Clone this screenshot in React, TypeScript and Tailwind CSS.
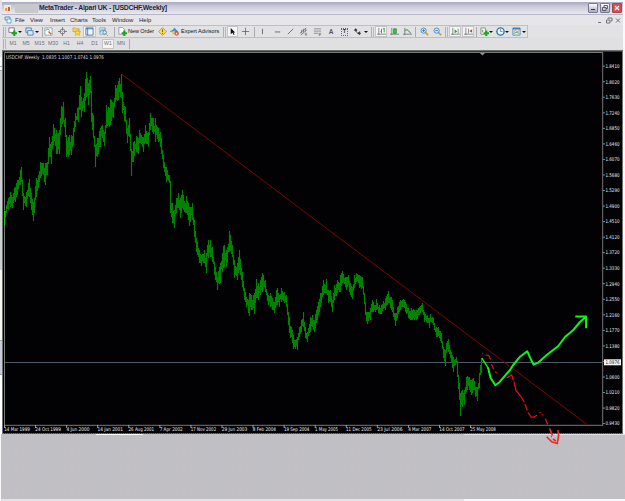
import React from "react";

type Band = [number, number, number];

// x, high, low: measured at three units per pixel, relative to each segment's origin
const segments: { ox: number; oy: number; pts: Band[] }[] = [
  {
    ox: 0,
    oy: 50,
    pts: [
      [14,480,525],[20,465,490],[30,425,470],[38,440,475],[45,410,455],[52,390,435],[60,360,405],[65,350,395],[69,430,480],[78,425,470],[88,387,440],[95,430,480],[101,455,512],[108,385,440],[115,375,415],[122,335,385],[130,340,375],[136,340,405],[142,335,375],[148,262,320],[155,275,342],[160,222,285],[168,240,312],[178,240,312],[183,168,230],[190,155,215],[195,205,260],[200,260,320],[206,260,322],[213,255,315],[220,235,285],[226,190,230],[235,170,215],[240,108,180],[245,140,200],[252,130,185],[259,65,140],[265,100,165],[271,78,130],[275,165,215],[280,195,265],[287,290,350],[293,265,322],[300,235,290],[306,225,265],[313,245,288],[320,165,235],[327,175,232],[332,148,225],[340,160,205],[347,105,155],[355,92,150],[363,73,145],[368,125,190],[375,170,215],[382,235,280],[389,205,260],[395,310,377],[400,275,335],[410,258,305],[416,265,312],[419,240,280],
    ],
  },
  {
    ox: 140,
    oy: 80,
    pts: [
      [0,160,190],[10,170,215],[17,135,190],[25,155,200],[31,100,150],[38,115,155],[45,115,185],[55,145,185],[62,155,200],[70,225,265],[80,260,305],[87,285,310],[92,350,400],[98,370,430],[102,390,445],[108,355,400],[115,340,385],[121,355,415],[127,330,385],[135,370,400],[140,347,400],[148,380,438],[157,370,420],[163,420,470],[170,475,515],[178,510,550],
    ],
  },
  {
    ox: 200,
    oy: 220,
    pts: [
      [4,105,138],[12,90,130],[18,100,158],[24,60,115],[32,60,110],[38,80,125],[45,140,180],[52,170,210],[60,130,190],[66,100,155],[72,75,140],[80,90,140],[88,33,95],[97,75,110],[104,120,175],[112,130,180],[119,90,150],[126,155,200],[134,205,240],[140,230,260],[148,220,288],[155,225,270],[162,220,282],[168,178,235],[176,190,240],[188,160,215],[196,180,215],[204,225,255],[212,220,260],[222,245,280],[231,203,255],[238,225,260],[244,205,245],[252,215,250],[260,225,262],[268,290,340],[276,330,370],[281,345,388],[292,350,390],[298,320,350],[304,300,335],[310,275,320],[316,320,355],[323,335,367],[332,290,335],[338,285,320],[342,300,335],[350,270,310],[356,245,285],[362,220,260],[370,180,225],[378,178,220],[386,210,250],[391,210,245],[397,240,277],[404,195,240],[412,180,220],[417,190,215],
    ],
  },
  {
    ox: 340,
    oy: 240,
    pts: [
      [0,105,155],[8,93,130],[18,110,150],[25,105,135],[30,130,165],[37,140,178],[44,105,145],[50,98,125],[58,105,145],[66,110,145],[71,150,165],[76,190,225],[82,215,253],[90,205,240],[98,180,215],[105,195,215],[110,178,210],[117,195,222],[124,195,222],[135,175,210],[145,153,190],[152,170,205],[158,180,215],[165,220,258],[172,200,235],[182,180,210],[190,178,200],[197,185,215],[205,205,235],[213,205,240],[222,210,240],[230,210,240],[238,200,225],[246,190,215],[254,215,245],[262,225,250],[268,235,265],[272,222,245],[280,235,255],[288,260,290],[296,260,288],[304,280,310],[310,320,355],[315,330,377],[320,310,340],[325,297,335],[333,335,370],[340,350,397],[348,352,370],[352,370,410],[357,430,480],[361,460,527],[366,450,500],[373,450,495],[380,410,455],[388,410,450],[395,420,465],[401,415,450],[407,440,470],[412,440,482],[418,400,445],[424,355,400],
    ],
  },
];

const bands: Band[] = segments.flatMap((s) =>
  s.pts.map(([x, h, l]): Band => [s.ox + x / 3, s.oy + h / 3, s.oy + l / 3])
);

function buildBars(): string {
  bands.sort((a, b) => a[0] - b[0]);
  const last = Math.round(bands[bands.length - 1][0]);
  // every weekly bar covers one pixel column; measured extremes land on their own column
  const measured = new Map<number, [number, number]>();
  for (const [x, h, l] of bands) {
    const k = Math.floor(x);
    const m = measured.get(k);
    measured.set(k, m ? [Math.min(m[0], h), Math.max(m[1], l)] : [h, l]);
  }
  let d = "";
  let i = 0;
  let prev: [number, number] | null = null;
  for (let px = Math.floor(bands[0][0]); px <= last; px++) {
    let top: number;
    let bot: number;
    const m = measured.get(px);
    if (m) {
      [top, bot] = m;
    } else {
      while (i < bands.length - 2 && bands[i + 1][0] < px + 0.5) i++;
      const [x0, h0, l0] = bands[i];
      const [x1, h1, l1] = bands[i + 1];
      const t = Math.min(1, Math.max(0, (px + 0.5 - x0) / (x1 - x0 || 1)));
      const h = h0 + (h1 - h0) * t;
      const l = l0 + (l1 - l0) * t;
      const a = Math.abs(Math.sin(px * 12.9898) * 17.31) % 1;
      const b = Math.abs(Math.sin(px * 78.233) * 23.7) % 1;
      top = h + (l - h) * (0.42 * a - 0.06);
      bot = l - (l - h) * (0.42 * b - 0.06);
    }
    top = Math.round(top);
    bot = Math.max(Math.round(bot), top + 4);
    // neighbouring bars always share part of their range
    if (prev) {
      top = Math.min(top, prev[1] - 2);
      bot = Math.max(bot, prev[0] + 2);
    }
    prev = [top, bot];
    d += `M${px + 0.5} ${top}V${bot}`;
  }
  return d;
}
const bars = buildBars();

const prices = ["1.8410","1.8020","1.7630","1.7240","1.6850","1.6460","1.6070","1.5680","1.5290","1.4900","1.4510","1.4120","1.3720","1.3330","1.2940","1.2550","1.2160","1.1770","1.1380","","1.0600","1.0210","0.9820","0.9430"];
const dates = ["14 Mar 1999","24 Oct 1999","4 Jun 2000","14 Jan 2001","26 Aug 2001","7 Apr 2002","17 Nov 2002","29 Jun 2003","8 Feb 2004","19 Sep 2004","1 May 2005","11 Dec 2005","23 Jul 2006","4 Mar 2007","14 Oct 2007","25 May 2008"];

function Chart() {
  return (
    <svg className="block h-[384px] w-[621px] font-['DejaVu_Sans_Condensed','DejaVu_Sans',sans-serif]" viewBox="2 50 621 384">
      <rect x="2" y="50" width="621" height="384" fill="#6f716d" />
      <rect x="3" y="51.5" width="619" height="381.5" fill="#020104" />
      <path d="M4.5 425V52.5H603" fill="none" stroke="#777b7b" />
      <path d="M602.7 52.5V425.5M4 425.3H603" fill="none" stroke="#777" />
      <path d="M4 433.4H622" stroke="#2c2c2c" strokeWidth=".8" strokeDasharray="1 1" />
      <path d="M5 362.5H603" stroke="#4f5a66" />
      <path d="M480 53h5l-2.5 2.4z" fill="#8598a8" />
      <path d={bars} stroke="#008400" strokeWidth="1.15" fill="none" />
      <path d="M4.7 211v14" stroke="#20e020" />
      <path d="M121.5 74L587 424.5" stroke="#8c0505" strokeWidth=".9" />
      <g fill="none" stroke="#f01010" strokeWidth="1.2" strokeLinecap="round">
        <path d="M482.6 353.6h.1M486 355l3 .8 1.4 3.2M491.7 364.5l1.8 4.5M495.5 372l.8.6M507.5 377.4l4.2-2.4 1.5 5" />
        <path d="M514 382l2 8.5 4.6 5.5 3.4 5.5M525 404.5l2.2 5.5M528.5 413l2.5 4 2.8.2 3-1.9M540 412.4h.2M542.6 414.5h.2M545.5 419l2 5M549.5 428.5l2.6 6.5" />
      </g>
      <path d="M481.8 358.2l6.6 10.2" fill="none" stroke="#08f818" strokeWidth="1.4" />
      <path d="M488 367.5l2.600 10.500 4.800 7.200 4-3L510 370l3.200-5 6.800-8.300 7.200-5.500 2.800 6.200 3.500 7.200 4.800-2 8.400-7.600 11.600-9L565 337l8.300-7 6.700-8 6-5.300M575.300 316.400h10.800v11.800" fill="none" stroke="#08f818" strokeWidth="2" strokeLinejoin="round" />
      <text x="6" y="58.5" fill="#ddd" fontSize="5.1" textLength="98" lengthAdjust="spacingAndGlyphs" xmlSpace="preserve">USDCHF,Weekly  1.0835 1.1007 1.0741 1.0976</text>
      {prices.map((p, i) => (
        <g key={i}>
          <path d={`M603 ${66.2 + i * 15.54}h2`} stroke="#aaa" strokeWidth=".8" />
          {p && <text x="605.5" y={68 + i * 15.54} fill="#eee" fontSize="5.2" textLength="14" lengthAdjust="spacingAndGlyphs">{p}</text>}
        </g>
      ))}
      <rect x="604" y="359.3" width="17" height="6" fill="#f4f4f4" />
      <text x="605.5" y="364.2" fill="#111" fontSize="5" textLength="14" lengthAdjust="spacingAndGlyphs">1.0976</text>
      {dates.map((d, i) => (
        <g key={d}>
          <path d={`M${4.5 + i * 31.07} 425v3`} stroke="#bbb" strokeWidth=".8" />
          <text x={4.3 + i * 31.07} y="431.3" fill="#eee" fontSize="5.1" textLength={d.length * 2.35 - 0.4} lengthAdjust="spacingAndGlyphs">{d}</text>
        </g>
      ))}
    </svg>
  );
}

function Icon({ w = "w-[14px]", active = false, children }: { w?: string; active?: boolean; children: React.ReactNode }) {
  return (
    <span className={`flex h-[11px] shrink-0 items-center justify-center ${w} ${active ? "border border-[#c6c6c8] bg-[#f5f5f5]" : ""}`}>
      <svg viewBox="0 0 10 10" className="h-[9px] w-[9px] shrink-0" fill="none" stroke="#666" strokeWidth="1">{children}</svg>
    </span>
  );
}
const Caret = () => <span className="mr-[2px] h-0 w-[4px] shrink-0 border-x-2 border-t-2 border-x-transparent border-t-[#111]" />;
const Sep = ({ w = "w-[4px]" }: { w?: string }) => (
  <span className={`flex h-[10px] shrink-0 justify-center ${w}`}><span className="w-px bg-[#aaaaad]" /></span>
);
const Grip = () => (
  <span className="flex h-[10px] w-[5px] shrink-0 justify-center gap-px"><span className="w-px bg-[#b0b0b3]" /><span className="w-px bg-[#b8b8bb]" /></span>
);
const Plus = () => <path d="M7 4v6M4 7h6" stroke="#16a816" strokeWidth="2.3" />;
const Bubble = ({ minus = false }: { minus?: boolean }) => (
  <>
    <path d="M6 6l3 3" stroke="#c9a21c" strokeWidth="1.8" />
    <circle cx="4" cy="4" r="2.9" fill="#d4ebfb" stroke="#4488bd" />
    <path d={minus ? "M2.5 4h3" : "M2.5 4h3M4 2.5v3"} stroke="#2a67a3" strokeWidth=".9" />
  </>
);

function Toolbar() {
  return (
    <div className="flex h-[13px] w-[526px] items-center overflow-hidden border-y border-r border-[#bfbfc3] bg-[#e2e2e5]">
      <Grip />
      <Icon w="w-[11px]"><path d="M1 1h6v5H1z" fill="#fff" stroke="#637b8c" /><Plus /></Icon><Caret />
      <Icon w="w-[11px]"><path d="M1 1h6v5H1z" fill="#c9e1f5" stroke="#4d83b4" /><path d="M3 4h6v5H3z" fill="#d9ebf8" stroke="#4d83b4" /></Icon><Caret />
      <Sep w="w-[2px]" />
      <Icon w="w-[11px]"><path d="M1 1h8v8H1z" fill="#fff" stroke="#8ba5b7" /><path d="M2 4l2-2 2 2" stroke="#24a52c" /><path d="M5 5l3 3" stroke="#e65332" strokeWidth="1.5" /></Icon>
      <Icon w="w-[16px]"><circle cx="5" cy="5" r="2.7" stroke="#767676" /><path d="M5 0v4M5 6v4M0 5h4M6 5h4" stroke="#777" /></Icon>
      <Icon w="w-[13px]"><path d="M1 1h3l1 1h3v3H1z" fill="#f5d35c" stroke="#c69c26" strokeWidth=".7" /><path d="M6 3l1.2 2 2.4.3-1.8 1.6.5 2.4L6 8.2 3.9 9.3l.4-2.4-1.600-1.600L5 5z" fill="#ffdc3d" stroke="#c98f18" strokeWidth=".6" /></Icon>
      <Icon w="w-[13px]" active><path d="M1 1h8v8H1zM3 1v8" fill="#f8fcff" stroke="#3c78b4" /><path d="M1 2h8" stroke="#3c78b4" /></Icon>
      <Icon w="w-[15px]"><path d="M1 1h6v7H1z" fill="#e6f1f8" stroke="#7fa7c4" /><path d="M2 6V4l2-1 1 2 1-3" stroke="#4f86ae" /><circle cx="6.3" cy="6" r="2" fill="#d2eafb" stroke="#4888ba" /><path d="M8 8l2 2" stroke="#d0a02e" /></Icon>
      <Sep w="w-[6px]" />
      <Icon w="w-[11px]"><path d="M1 .5h4l2 2V8H1z" fill="#fff" stroke="#6e8ca0" strokeWidth=".8" /><Plus /></Icon>
      <span className="w-[28px] shrink-0 whitespace-nowrap text-[5.5px] tracking-[-0.05px] text-[#111]">New Order</span>
      <Icon w="w-[12px]"><path d="M5 .7L9.3 5 5 9.3.7 5z" fill="#ffda4d" stroke="#c6981e" /><path d="M5 2.7v3M5 6.8v1" stroke="#7a5815" /></Icon>
      <Icon w="w-[13px]"><path d="M2 5l3-4 3 4z" fill="#4d9dd8" stroke="#3377a8" strokeWidth=".6" /><path d="M0 5q5-3 9 0" stroke="#4a8ec1" /><circle cx="4" cy="6.5" r="2" fill="#f0c466" stroke="none" /><circle cx="7.4" cy="7.2" r="2.4" fill="#e03525" stroke="none" /><path d="M6.3 6.3h2v2h-2z" fill="#fff" stroke="none" /></Icon>
      <span className="w-[41px] shrink-0 whitespace-nowrap text-[5.5px] text-[#111]">Expert Advisors</span>
      <Grip />
      <Icon w="w-[11px]" active><path d="M3 1v7l2-1.600L6.300 9l1-.5L6.100 6H8z" fill="#111" stroke="none" /></Icon>
      <Icon w="w-[15px]"><path d="M5 1v8M1 5h8" stroke="#555" strokeWidth=".8" /></Icon>
      <Sep w="w-[2px]" />
      <Icon w="w-[15px]"><path d="M5 2v6" /></Icon>
      <Icon w="w-[14px]"><path d="M2 5.5h6" /></Icon>
      <Icon w="w-[13px]"><path d="M2 8l6-6" /></Icon>
      <Icon w="w-[13px]"><path d="M1 7l7-6M2 9l7-6M3 3v4M5 2v4M7 2v3" strokeWidth=".8" /><path d="M7 7h2M7 7v2h2M7 8h2" strokeWidth=".6" /></Icon>
      <Icon><path d="M1 2h8M1 4.5h8M1 7h5M7 7h2M7 7v3M7 8.5h2" strokeWidth=".7" /></Icon>
      <span className="w-[14px] shrink-0 text-center text-[6.5px] font-bold leading-[11px] text-[#555]">A</span>
      <span className="flex w-[13px] shrink-0 justify-center"><span className="flex h-[8px] w-[7px] items-center justify-center border border-dotted border-[#666] text-[5.5px] font-bold text-[#333]">T</span></span>
      <Icon w="w-[13px]"><path d="M1 3.500L3 1.500 5 3.500 3 5z" fill="#333" stroke="none" /><path d="M3 4l2 3 3-2" stroke="#555" /><path d="M5 7l2-1.500L9 7 7 9z" fill="#333" stroke="none" /></Icon><Caret />
      <Grip />
      <Icon w="w-[12px]" active><path d="M2 1v8M0 8h10" strokeWidth=".8" /><path d="M5 2v5M5 5H4M8 1v5M8 2H6.500" stroke="#26a232" /></Icon>
      <Icon w="w-[14px]"><path d="M2 1v8M0 8h10" strokeWidth=".8" /><path d="M4 2h3v5H4z" fill="#32d435" stroke="#188724" strokeWidth=".8" /></Icon>
      <Icon w="w-[13px]"><path d="M2 1v8M0 8h10" strokeWidth=".8" /><path d="M2 4q3-2 4 0t3 3" stroke="#278a35" /></Icon>
      <Sep w="w-[3px]" />
      <Icon w="w-[14px]"><Bubble /></Icon>
      <Icon w="w-[13px]"><Bubble minus /></Icon>
      <Grip />
      <Icon w="w-[12px]" active><path d="M2 1v8M0 8h10M8 2v5" strokeWidth=".8" /><path d="M4 2.500L7 5 4 7z" fill="#20ad32" stroke="none" /></Icon>
      <span className="w-px shrink-0" />
      <Icon w="w-[12px]" active><path d="M2 1v8M0 8h10M5 2v5" strokeWidth=".8" /><path d="M9 2.500L6 4.500l3 2z" fill="#ba4935" stroke="none" /></Icon>
      <Sep w="w-[5px]" />
      <Icon w="w-[10px]"><path d="M1 1h5v7H1z" fill="#fff" stroke="#748c78" /><path d="M3 3v3" /><Plus /></Icon><Caret />
      <Icon w="w-[10px]"><circle cx="5" cy="5" r="4" fill="#edf7ff" stroke="#3076b9" strokeWidth="1.6" /><path d="M5 2.500V5h2" stroke="#446" strokeWidth=".7" /></Icon><Caret />
      <Icon w="w-[11px]"><path d="M1 1h8v8H1z" fill="#e9f4fa" stroke="#4f8bb3" /><path d="M1 2h8" stroke="#3274aa" strokeWidth="1.5" /><path d="M2 5l2-1 2 1 2-1" stroke="#b6893b" /><path d="M2 7l3-1 3 1" stroke="#34a347" /></Icon><Caret />
    </div>
  );
}

const menus: [string, string][] = [["File","w-[15px]"],["View","w-5"],["Insert","w-5"],["Charts","w-[22px]"],["Tools","w-5"],["Window","w-[27px]"],["Help","w-4"]];
const frames: [string, string][] = [["M1","w-[12px]"],["M5","w-[14px]"],["M15","w-[13px]"],["M30","w-[14px]"],["H1","w-[13px]"],["H4","w-[14px]"],["D1","w-[15px]"],["W1","w-[12px]"],["MN","w-[14px]"]];

export default function App() {
  return (
    <div className="flex h-[501px] w-[625px] flex-col overflow-hidden bg-[#f9f9fb] font-['Liberation_Sans',Arial,sans-serif] leading-none">
      <div className="flex h-[434px]">
        <div className="flex w-[2px] flex-col">
          <div className="h-[57px] bg-[#e2e4e7]" />
          <div className="h-[9px] bg-[#f8f8f8]" />
          <div className="h-[5px] border-y border-[#a9adb0] bg-white" />
          <div className="h-[199px] bg-[#cbd0d3]" />
          <div className="h-[70px] bg-[#f5f5f2]" />
          <div className="h-[35px] border-y border-[#9aa2b0] bg-[#c9ccda]" />
          <div className="flex-1 bg-white" />
        </div>
        <div className="flex w-[621px] flex-col">
          <div className="mt-[2px] flex h-[12px] items-center bg-linear-to-b from-[#a8a8c0] via-[#c9c9d9] via-35% to-[#e9e9f0]">
            <span className="ml-[2px] flex h-[7px] w-[7px] items-end gap-px bg-[#f8e9c5] p-px"><span className="h-[3px] w-[2px] bg-[#e69862]" /><span className="h-[4px] w-[2px] bg-[#d3584b]" /></span>
            <span className="ml-[4px] h-[9px] w-[23px] bg-[#c8c8cb]" />
            <span className="w-[138px] whitespace-nowrap pl-px pt-px text-[6.9px] font-bold tracking-[-0.26px] text-[#262630]">MetaTrader - Alpari UK - [USDCHF,Weekly]</span>
            <span className="ml-auto flex items-center gap-[2px]">
              <span className="flex h-[10px] w-[10px] items-end rounded-[1px] border border-[#777991] bg-linear-to-b from-white to-[#a9abc0] p-[2px]"><span className="h-px w-[4px] bg-[#333]" /></span>
              <span className="flex h-[10px] w-[10px] items-center justify-center rounded-[1px] border border-[#777991] bg-linear-to-b from-white to-[#a9abc0]"><svg viewBox="0 0 6 6" className="h-[6px] w-[6px]" fill="none" stroke="#444"><path d="M2 2V.5h3.500v3H4M.5 2.500H4v3H.5z" strokeWidth=".8" /></svg></span>
              <span className="flex h-[10px] w-[10px] items-center justify-center rounded-[1px] border border-[#9d4a4d] bg-[#d84c50]"><svg viewBox="0 0 6 6" className="h-[6px] w-[6px]" stroke="white"><path d="M1 1l4 4M5 1L1 5" strokeWidth="1.2" /></svg></span>
            </span>
            <span className="w-px" />
          </div>
          <div className="flex h-[11px] items-center border-t border-[#b7b5c9] bg-[#e6e6e9] text-[6px] text-[#252528]">
            <svg viewBox="0 0 8 8" className="ml-[2px] mr-[3px] h-[8px] w-[8px]"><path d="M1 1h5v3H1z" fill="#d5ebfa" stroke="#529bc9" /><path d="M3 3h4v4H3z" fill="#f5faff" stroke="#529bc9" strokeWidth=".8" /></svg>
            {menus.map(([m, w]) => <span key={m} className={`${w} shrink-0 whitespace-nowrap pb-px`}>{m}</span>)}
            <svg viewBox="0 0 26 7" className="ml-auto h-[7px] w-[26px]" fill="none" stroke="#666"><path d="M1 5.500h3M11 2V1h4v3h-1M9.500 3h3.500v3H9.500zM19 1.500l4 4M23 1.500l-4 4" strokeWidth=".9" /></svg>
          </div>
          <div className="bg-[#e2e2e5]"><Toolbar /></div>
          <div className="flex h-[12px] items-center bg-[#e0e0e3] text-[5.2px] text-[#707073]">
            <Grip />
            {frames.map(([f, w]) => <span key={f} className={`${w} flex h-[10px] shrink-0 items-center justify-center ${f === "W1" ? "border border-[#c4c4c7] bg-[#f4f4f5]" : ""}`}>{f}</span>)}
            <Sep w="w-[3px]" />
          </div>
          <Chart />
        </div>
      </div>
      <div className="relative ml-px h-[65px] bg-[#c0c0c4]">
        <div className="h-full bg-[radial-gradient(circle_at_1px_1px,#d6bdb7_0.6px,transparent_0.9px),radial-gradient(circle_at_4px_3px,#b8bfd6_0.6px,transparent_0.9px)] bg-size-[7px_5px] opacity-50" />
        <div className="absolute left-[95px] top-0 h-px w-[47px] bg-white" />
        <div className="absolute left-[463px] top-0 h-px w-[161px] bg-[#e2e2e4]" />
        <svg viewBox="540 426 24 20" className="absolute left-[539px] top-[-8px] h-5 w-6" fill="none" stroke="#f02628"><path d="M546.700 436.700l5 5 5.600 1.800 1.300-8-.8-5.700M550 429l2.500 6.500M551 436.500h1M553 439l3 2" strokeWidth="1.600" /></svg>
      </div>
      <div className="flex h-[2px]"><span className="ml-px w-[463px] bg-[#e6e2e5]" /></div>
    </div>
  );
}
